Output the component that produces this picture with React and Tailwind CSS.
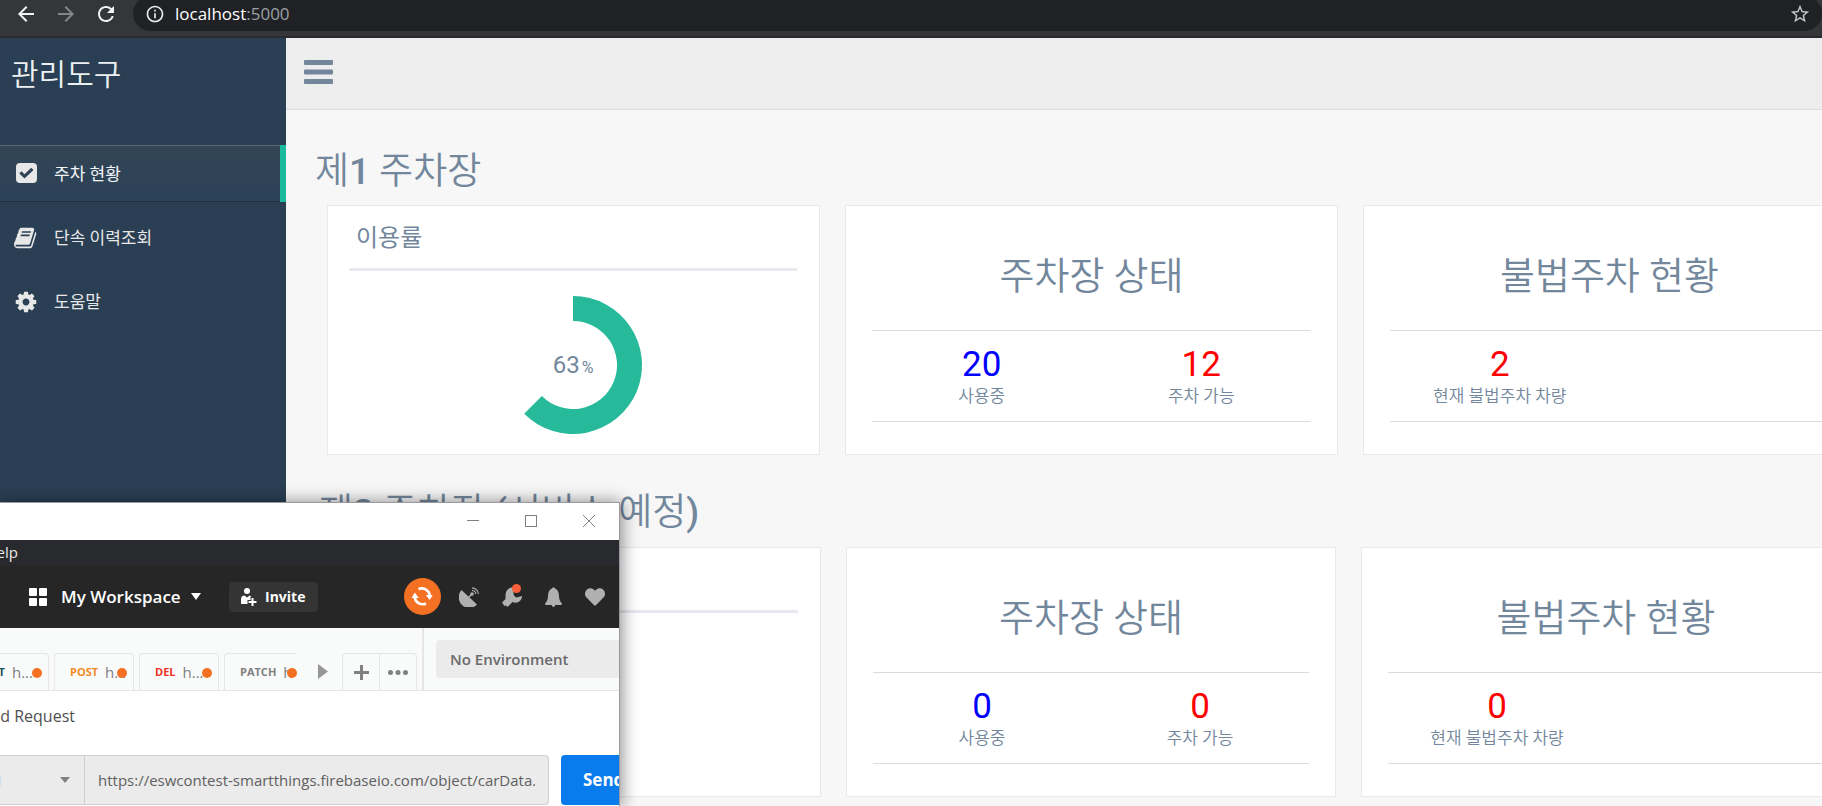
import React from "react";
import { MdArrowBack, MdArrowForward, MdRefresh, MdInfoOutline, MdStarBorder } from "react-icons/md";
import { FaHeart } from "react-icons/fa";

function CheckIcon() {
  return (
    <svg viewBox="0 0 24 24" className="size-6 fill-current" aria-hidden="true">
      <path fillRule="evenodd" d="M6 1H19Q23 1 23 5V17Q23 21 19 21H6Q2 21 2 17V5Q2 1 6 1ZM10.500 16.500L19.500 8L17.300 5.800L10.500 12.200L7.500 9.300L5.300 11.500Z" />
    </svg>
  );
}

function BookIcon() {
  return (
    <svg viewBox="0 0 1792 1792" className="size-6 fill-current" aria-hidden="true">
      <path d="M1639 478q40 57 18 129l-275 906q-19 64-76.500 107.500t-122.500 43.500h-923q-77 0-148.500-53.500t-99.500-131.500q-24-67-2-127 0-4 3-27t4-37q1-8-3-21.500t-3-19.500q2-11 8-21t16.500-23.500 16.500-23.500q23-38 45-91.500t30-91.500q3-10 0.500-30t-0.500-28q3-11 17-28t17-23q21-36 42-92t25-90q1-9-2.500-32t0.500-28q4-13 22-30.500t22-22.500q19-26 42.500-84.500t27.500-96.500q1-8-3-25.500t-2-26.500q2-8 9-18t18-23 17-21q8-12 16.500-30.500t15-35 16-36 19.500-32 26.500-23.500 36-11.500 47.500 5.500l-1 3q38-9 51-9h761q74 0 114 56t18 130l-274 906q-36 119-71.500 153.500t-128.500 34.500h-869q-27 0-38 15-11 16-1 43 24 70 144 70h923q29 0 56-15.500t35-41.500l300-987q7-22 5-57 38 15 59 43zm-1064 2q-4 13 2 22.500t20 9.500h608q13 0 25.500-9.500t16.500-22.500l21-64q4-13-2-22.500t-20-9.500h-608q-13 0-25.500 9.500t-16.500 22.500zm-83 256q-4 13 2 22.500t20 9.500h608q13 0 25.500-9.500t16.500-22.500l21-64q4-13-2-22.500t-20-9.500h-608q-13 0-25.500 9.500t-16.500 22.500z" />
    </svg>
  );
}

function CogIcon() {
  return (
    <svg viewBox="0 0 1792 1792" className="size-6 fill-current" aria-hidden="true">
      <path d="M1152 896q0-106-75-181t-181-75-181 75-75 181 75 181 181 75 181-75 75-181zm512-109v222q0 12-8 23t-20 13l-185 28q-19 54-39 91 35 50 107 138 10 12 10 25t-9 23q-27 37-99 108t-94 71q-12 0-26-9l-138-108q-44 23-91 38-16 136-29 186-7 28-36 28h-222q-14 0-24.500-8.500t-11.500-21.500l-28-184q-49-16-90-37l-141 107q-10 9-25 9-14 0-25-11-126-114-165-168-7-10-7-23 0-12 8-23 15-21 51-66.500t54-70.500q-27-50-41-99l-183-27q-13-2-21-12.500t-8-23.500v-222q0-12 8-23t19-13l186-28q14-46 39-92-40-57-107-138-10-12-10-24 0-10 9-23 26-36 98.500-107.500t94.500-71.500q13 0 26 10l138 107q44-23 91-38 16-136 29-186 7-28 36-28h222q14 0 24.500 8.500t11.500 21.500l28 184q49 16 90 37l142-107q9-9 24-9 13 0 25 10 129 119 165 170 7 8 7 22 0 12-8 23-15 21-51 66.500t-54 70.500q26 50 41 98l183 28q13 2 21 12.500t8 23.500z" />
    </svg>
  );
}

function BrowserBar() {
  return (
    <header className="flex h-[38px] shrink-0 items-end overflow-hidden border-b-2 border-[#292a2d] bg-[#35363a] pb-[5px] font-['Open_Sans','Noto_Sans',sans-serif]">
      <div className="flex h-[35px] w-[133px] shrink-0 items-center gap-[16px] pl-[14px]">
        <button aria-label="Back" className="text-[#f1f3f4]"><MdArrowBack className="size-6" /></button>
        <button aria-label="Forward" className="text-[#85868a]"><MdArrowForward className="size-6" /></button>
        <button aria-label="Reload" className="text-[#f1f3f4]"><MdRefresh className="size-6" /></button>
      </div>
      <div className="flex h-[35px] flex-1 items-center rounded-full bg-[#202124] pl-3 pr-[11px]">
        <MdInfoOutline className="size-5 text-[#e8eaed]" />
        <span className="ml-[10px] flex-1 text-[17px] text-white">localhost<span className="text-[#9aa0a6]">:5000</span></span>
        <button aria-label="Bookmark" className="text-[#c4c5c8]"><MdStarBorder className="size-[22px]" /></button>
      </div>
    </header>
  );
}

function NavItem({ icon, label, active }) {
  return (
    <li className={active ? "h-[57px] border-r-[6px] border-[#1abb9c]" : "h-[57px] border-r-[6px] border-transparent"}>
      <a
        href="#"
        className={
          active
            ? "flex h-full items-center gap-[14px] border-y border-t-[#586979] border-b-[#1f3142] bg-linear-to-b from-[#334556] to-[#2c4257] pl-[14px] text-[17px] text-[#f2f5f7]"
            : "flex h-full items-center gap-[14px] pl-[14px] text-[17px] text-[#e7e7e7]"
        }
      >
        <span className="flex w-[26px] items-center text-[#e7e7e7]">{icon}</span>
        <span className="pt-[3px]">{label}</span>
      </a>
    </li>
  );
}

function Sidebar() {
  return (
    <nav className="w-[286px] shrink-0 bg-[#2a3f54]">
      <a href="#" className="flex h-[72px] items-center pl-[11px] text-[30px] font-[350] text-[#ecf0f1]">관리도구</a>
      <ul className="mt-[35px] flex flex-col gap-[7px]">
        <NavItem active label="주차 현황" icon={<CheckIcon />} />
        <NavItem label="단속 이력조회" icon={<BookIcon />} />
        <NavItem label="도움말" icon={<CogIcon />} />
      </ul>
    </nav>
  );
}

function Card({ children }) {
  return <section className="h-[250px] border border-[#e6e9ed] bg-white">{children}</section>;
}

function UsageCard({ donut }) {
  return (
    <Card>
      <div className="pl-[21px] pr-[22px]">
        <h3 className="h-[65px] border-b-[3px] border-[#e6e9ed] px-[7px] pt-[10px] text-[24px] leading-[44px]">이용률</h3>
        {donut && (
          <div className="mt-[25px] grid place-items-center">
            <svg viewBox="-69 -69 138 138" className="col-start-1 row-start-1 size-[138px]" aria-hidden="true">
              <path d="M0-69A69 69 0 1 1-48.800 48.800L-31.100 31.100A44 44 0 1 0 0-44Z" fill="#26b99a" />
            </svg>
            <p className="col-start-1 row-start-1 flex items-baseline gap-[2px] text-[24px]">
              63<span className="text-[16px]">%</span>
            </p>
          </div>
        )}
      </div>
    </Card>
  );
}

function StatCard({ title, stats }) {
  return (
    <Card>
      <div className="px-[26px]">
        <h3 className="h-[124px] pt-[44px] text-center text-[38px] font-[350] leading-[52px]">{title}</h3>
        <dl className="grid h-[92px] grid-cols-2 border-y border-[#d9dcdf] pt-[15px] text-center">
          {stats.map((s) => (
            <div key={s.label} className="flex flex-col-reverse justify-end">
              <dt className="text-[17px] font-[350] leading-6">{s.label}</dt>
              <dd className={s.blue ? "text-[35px] leading-[38px] text-[#0000ff]" : "text-[35px] leading-[38px] text-[#ff0000]"}>{s.value}</dd>
            </div>
          ))}
        </dl>
      </div>
    </Card>
  );
}

function Dashboard() {
  return (
    <main className="min-w-0 flex-1 overflow-hidden bg-[#f7f7f7]">
      <div className="flex h-[72px] items-center border-b border-[#d9dee4] bg-[#ededed] pb-[3px] pl-[18px]">
        <button aria-label="Menu" className="text-[#73879c]">
          <svg viewBox="0 0 29 24" className="h-6 w-[29px] fill-current" aria-hidden="true">
            <rect width="29" height="5" rx="1" />
            <rect y="9.500" width="29" height="5" rx="1" />
            <rect y="19" width="29" height="5" rx="1" />
          </svg>
        </button>
      </div>
      <h2 className="pl-[29px] pt-[36px] text-[37px] font-[350] leading-[52px]">제<span className="font-medium">1</span> 주차장</h2>
      <div className="ml-[41px] mr-[-34px] mt-[7px] grid grid-cols-3 gap-[25px]">
        <UsageCard donut />
        <StatCard title="주차장 상태" stats={[{ label: "사용중", value: 20, blue: true }, { label: "주차 가능", value: 12 }]} />
        <StatCard title="불법주차 현황" stats={[{ label: "현재 불법주차 차량", value: 2 }]} />
      </div>
      <h2 className="pl-[33px] pt-[32px] text-[37px] font-[350] leading-[52px]">
        제<span className="font-medium">2</span> 주차장 <span className="font-medium">(</span>서비스 예정<span className="font-medium">)</span>
      </h2>
      <div className="ml-[45px] mr-[-29px] mt-[8px] grid grid-cols-3 gap-[25px]">
        <UsageCard />
        <StatCard title="주차장 상태" stats={[{ label: "사용중", value: 0, blue: true }, { label: "주차 가능", value: 0 }]} />
        <StatCard title="불법주차 현황" stats={[{ label: "현재 불법주차 차량", value: 0 }]} />
      </div>
    </main>
  );
}

const tabs = [
  { method: "POST", color: "text-[#f08a1d]" },
  { method: "DEL", color: "text-[#ed2f1d]" },
];

function TabDot() {
  return <span className="absolute right-[6px] top-[14px] size-[10px] rounded-full bg-[#f47023]" />;
}

function RequestTabs() {
  return (
    <div className="flex h-[63px] items-end border-b border-[#e6e6e6] bg-[#f9fbfb]">
      <div className="flex w-[297px] shrink-0 gap-[5px] overflow-hidden text-[15px] text-[#808080]">
        <button className="relative -ml-[31px] flex h-[37px] w-[80px] shrink-0 items-center justify-end gap-[7px] rounded-t border border-b-0 border-[#e6e6e6] pr-[15px]">
          <b className="text-[11px] text-[#15505a]">GET</b>h...<TabDot />
        </button>
        {tabs.map((t) => (
          <button key={t.method} className="relative flex h-[37px] w-[80px] shrink-0 items-center gap-[7px] overflow-hidden rounded-t border border-b-0 border-[#e6e6e6] pl-[15px]">
            <b className={`text-[11px] ${t.color}`}>{t.method}</b>h...<TabDot />
          </button>
        ))}
        <button className="relative flex h-[37px] w-[73px] shrink-0 items-center gap-[7px] overflow-hidden rounded-tl border border-b-0 border-r-0 border-[#e6e6e6] pl-[15px]">
          <b className="text-[11px]">PATCH</b>h
          <span className="absolute right-0 top-[14px] size-[10px] rounded-full bg-[#f47023]" />
        </button>
      </div>
      <button aria-label="Next tabs" className="flex h-[37px] w-[45px] shrink-0 items-center pl-[21px]">
        <svg viewBox="0 0 10 15" className="h-[15px] w-[10px] fill-[#979797]"><path d="M0 0L10 7.500L0 15Z" /></svg>
      </button>
      <div className="mr-[5px] flex h-[37px] w-[75px] shrink-0 rounded-t border border-b-0 border-[#e6e6e6]">
        <button aria-label="New tab" className="grid flex-1 place-items-center border-r border-[#e6e6e6]">
          <svg viewBox="0 0 15 15" className="size-[15px] fill-[#808080]"><path d="M6 0H9V6H15V9H9V15H6V9H0V6H6Z" /></svg>
        </button>
        <button aria-label="More" className="grid flex-1 place-items-center">
          <svg viewBox="0 0 20 5" className="h-[5px] w-[20px] fill-[#808080]"><circle cx="2.500" cy="2.500" r="2.500" /><circle cx="10" cy="2.500" r="2.500" /><circle cx="17.500" cy="2.500" r="2.500" /></svg>
        </button>
      </div>
      <div className="flex h-full min-w-0 flex-1 items-center border-l-2 border-[#e6e6e6] pl-3">
        <select aria-label="Environment" className="h-[38px] w-[240px] shrink-0 appearance-none rounded-l bg-[#ebebeb] px-[14px] text-[15px] font-semibold text-[#6a6a6a]">
          <option>No Environment</option>
        </select>
      </div>
    </div>
  );
}

function ApiWindow() {
  return (
    <div className="absolute bottom-0 left-0 h-[304px] w-[620px] overflow-hidden border-r border-t border-[#9a9aa0] bg-white font-['Open_Sans','Noto_Sans',sans-serif] shadow-[2px_0_16px_rgba(0,0,0,0.45)]">
      <div className="flex h-[37px] items-center justify-end gap-[46px] pb-[2px] pr-[24px] text-[#808080]">
        <button aria-label="Minimize"><svg viewBox="0 0 12 12" className="size-3"><path d="M0 5.500H12" stroke="currentColor" /></svg></button>
        <button aria-label="Maximize"><svg viewBox="0 0 12 12" className="size-3"><rect x="0.500" y="0.500" width="11" height="11" fill="none" stroke="currentColor" /></svg></button>
        <button aria-label="Close"><svg viewBox="0 0 12 12" className="size-3"><path d="M0 0L12 12M12 0L0 12" stroke="currentColor" /></svg></button>
      </div>
      <div className="flex h-[25px] bg-[#292a2e]">
        <button className="flex w-[18px] items-center justify-end overflow-hidden text-[15px] text-[#e8e8e8]">Help</button>
      </div>
      <div className="flex h-[63px] items-center bg-[#262626] pl-[29px] text-white">
        <svg viewBox="0 0 18 18" className="size-[18px] fill-current"><rect width="8" height="8" rx="1" /><rect x="10" width="8" height="8" rx="1" /><rect y="10" width="8" height="8" rx="1" /><rect x="10" y="10" width="8" height="8" rx="1" /></svg>
        <button className="ml-[14px] flex w-[140px] shrink-0 items-center justify-between whitespace-nowrap text-[17px] font-semibold">
          My Workspace
          <svg viewBox="0 0 10 7" className="h-[7px] w-[10px] fill-current"><path d="M0 0H10L5 7Z" /></svg>
        </button>
        <button className="ml-[28px] flex h-[30px] w-[89px] items-center gap-2 rounded bg-[#343434] pl-3 text-[14px] font-bold">
          <svg viewBox="0 0 16 18" className="h-[18px] w-4 fill-current"><circle cx="6" cy="3" r="3" /><path d="M0 16V11.500Q0 7.500 3.500 7.500L6 9.500L8.500 7.500Q10 7.800 10.300 9H9.500V12H6.500V16Z" /><path d="M10.500 10H12.500V13H15.500V15H12.500V18H10.500V15H7.500V13H10.500Z" /></svg>
          Invite
        </button>
        <button aria-label="Sync" className="ml-[86px]">
          <svg viewBox="0 0 37 37" className="size-[37px]"><circle cx="18.500" cy="18.500" r="18.500" fill="#f47023" /><path d="M14.500 11.200A8 8 0 0 1 25.800 17M22 25.500A8 8 0 0 1 10.700 19.500" fill="none" stroke="#fff" strokeWidth="2.600" /><path d="M7.500 20L10.800 14.500L14.800 20ZM21.700 17H28.700L25.700 22Z" fill="#fff" /></svg>
        </button>
        <div className="ml-[18px] flex items-center gap-[23px] text-[#b0b0b0]">
          <button aria-label="Capture">
            <svg viewBox="0 0 20 20" className="size-5 fill-current"><path d="M2.500 3L18 17.500A10.500 10.500 0 0 1 2.500 3Z" /><path d="M9 11L13 7" stroke="currentColor" strokeWidth="1.500" /><circle cx="13" cy="7" r="1.800" /><path d="M13 3.500A4 4 0 0 1 16.800 7M13 0.800A6.500 6.500 0 0 1 19.400 7" fill="none" stroke="currentColor" strokeWidth="1.200" /></svg>
          </button>
          <button aria-label="Settings" className="relative">
            <svg viewBox="0 0 20 20" className="size-5 fill-current"><path d="M3.500 8C3.500 3 8 -1 13 1L11.500 5.500Q11 9 14.500 10.500L20 9C20 14 15.500 17 10.500 15L5.500 20L4 18.500L2.500 19L0 15.500L3.500 12Z" /></svg>
            <span className="absolute -top-[3px] right-[1px] size-[9px] rounded-full bg-[#f95f3b]" />
          </button>
          <button aria-label="Notifications">
            <svg viewBox="0 0 17 20" className="h-5 w-[17px] fill-current"><path d="M7 1.500Q8.500-1 10 1.500Q14 3 14 9Q14 14 17 16.500L16.500 18H10.300Q10 20 8.500 20Q7 20 6.700 18H0.500L0 16.500Q3 14 3 9Q3 3 7 1.500Z" /></svg>
          </button>
          <button aria-label="Favorites"><FaHeart className="size-5" /></button>
        </div>
      </div>
      <RequestTabs />
      <div className="flex h-[64px] items-start pt-[13px]">
        <h4 className="flex w-[75px] justify-end whitespace-nowrap text-[16px] font-medium leading-6 text-[#505050]">Untitled Request</h4>
      </div>
      <div className="flex h-[50px]">
        <div className="flex w-[549px] shrink-0 rounded-r border border-l-0 border-[#cfcfcf] bg-[#ebebeb] text-[15px] text-[#606060]">
          <div className="flex w-[85px] items-center justify-between border-r border-[#cfcfcf] pr-[14px]">
            <select aria-label="Method" className="-ml-[46px] w-[70px] appearance-none">
              <option>PATCH</option>
            </select>
            <svg viewBox="0 0 10 6" className="h-[6px] w-[10px] fill-[#808080]"><path d="M0 0H10L5 6Z" /></svg>
          </div>
          <input aria-label="Request URL" defaultValue="https://eswcontest-smartthings.firebaseio.com/object/carData.json" className="min-w-0 flex-1 px-[13px]" />
        </div>
        <button className="ml-3 w-[110px] shrink-0 rounded bg-[#097bed] pl-[22px] text-left text-[17px] font-bold text-white">Send</button>
      </div>
    </div>
  );
}

export default function App() {
  return (
    <div className="relative flex h-screen flex-col overflow-hidden font-['Roboto','Noto_Sans_CJK_KR',sans-serif] text-[#73879c]">
      <BrowserBar />
      <div className="flex min-h-0 flex-1">
        <Sidebar />
        <Dashboard />
      </div>
      <ApiWindow />
    </div>
  );
}
